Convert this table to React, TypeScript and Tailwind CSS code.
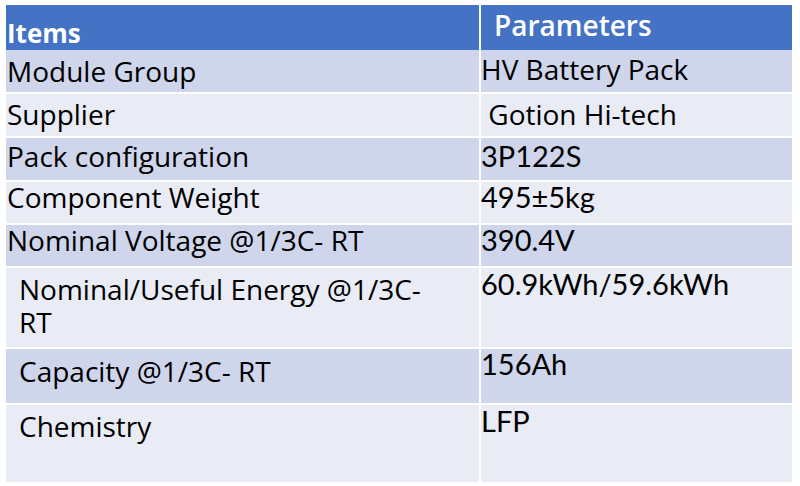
const muli = "font-['Open_Sans',sans-serif] text-[28px] leading-[31px]";
const calibri = "font-['Lato',sans-serif] text-[29px] leading-[30px]";

type Row = {
  label: string;
  value: string;
  h: string;
  bg: string;
  lp: string;
  vp: string;
  indent?: boolean;
  valueFont: string;
};

const rows: Row[] = [
  { label: "Module Group", value: "HV Battery Pack", h: "h-[42px]", bg: "bg-[#cfd5ea]", lp: "pt-[6px]", vp: "pt-[4px]", valueFont: muli },
  { label: "Supplier", value: "\u00a0Gotion Hi-tech", h: "h-[42px]", bg: "bg-[#e9ebf5]", lp: "pt-[5px]", vp: "pt-[5px]", valueFont: muli },
  { label: "Pack configuration", value: "3P122S", h: "h-[42px]", bg: "bg-[#cfd5ea]", lp: "pt-[3px]", vp: "pt-[3px]", valueFont: calibri },
  { label: "Component Weight", value: "495±5kg", h: "h-[41px]", bg: "bg-[#e9ebf5]", lp: "pt-0", vp: "pt-0", valueFont: calibri },
  { label: "Nominal Voltage @1/3C- RT", value: "390.4V", h: "h-[41px]", bg: "bg-[#cfd5ea]", lp: "pt-0", vp: "pt-0", valueFont: calibri },
  { label: "Nominal/Useful Energy @1/3C- RT", value: "60.9kWh/59.6kWh", h: "h-[79px]", bg: "bg-[#e9ebf5]", lp: "pt-[5px] leading-[33px]", vp: "pt-[1px]", indent: true, valueFont: calibri },
  { label: "Capacity @1/3C- RT", value: "156Ah", h: "h-[54px]", bg: "bg-[#cfd5ea]", lp: "pt-[7px]", vp: "pt-0", indent: true, valueFont: calibri },
  { label: "Chemistry", value: "LFP", h: "h-[77px]", bg: "bg-[#e9ebf5]", lp: "pt-[6px]", vp: "pt-[1px]", indent: true, valueFont: calibri },
];

export default function App() {
  return (
    <div className="w-[800px] h-[486px] bg-white pt-[5px] pl-[6px] overflow-hidden">
      <div className="w-[786px] flex flex-col gap-[2px] text-black">
        <div className="grid grid-cols-[473px_311px] gap-[2px] h-[43px]">
          <div className="bg-[#4472c4] text-white font-bold pl-px pt-[12px] font-['Open_Sans',sans-serif] text-[26px] leading-[33px]">
            Items
          </div>
          <div className="bg-[#4472c4] text-white font-semibold pl-[13px] pt-[5px] font-['Open_Sans',sans-serif] text-[28px] leading-[31px]">
            Parameters
          </div>
        </div>
        {rows.map((r) => (
          <div key={r.label} className={`grid grid-cols-[473px_311px] gap-[2px] ${r.h}`}>
            <div className={`${r.bg} ${muli} ${r.lp} ${r.indent ? "pl-[13px] pr-[30px]" : "pl-px"}`}>{r.label}</div>
            <div className={`${r.bg} ${r.valueFont} ${r.vp}`}>{r.value}</div>
          </div>
        ))}
      </div>
    </div>
  );
}
